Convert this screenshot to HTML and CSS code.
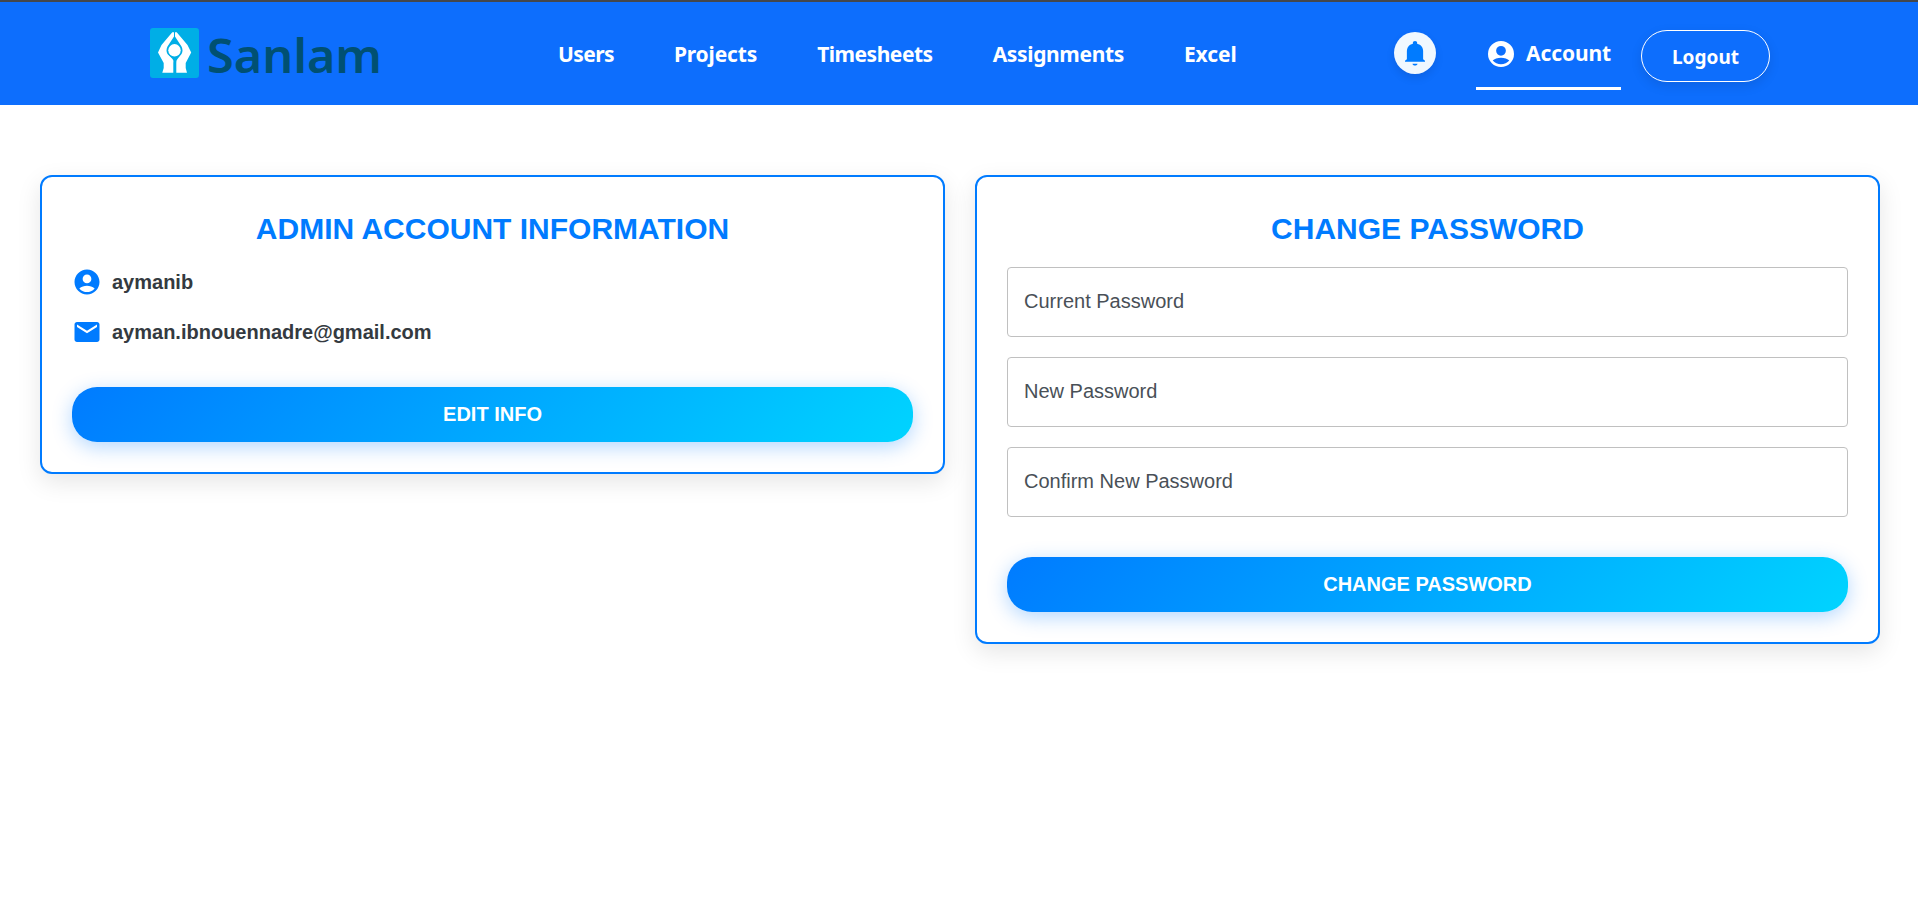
FILE: index.html
```html
<!DOCTYPE html>
<html lang="en">
<head>
<meta charset="utf-8">
<title>Account</title>
<link rel="stylesheet" href="styles.css">
</head>
<body>
<header class="navbar">
  <a class="brand">
    <svg class="brand-mark" width="49" height="50" viewBox="0 0 49 50">
      <rect width="49" height="50" rx="3" fill="#00aee6"/>
      <path fill="#fff" d="M22.300 4.300H24V8.500L17.500 18.500Q15.500 22.500 17.500 26L22.500 31Q24 32.500 23.300 35V44.700H12.300L13.700 40V35L8 24.500 11.500 17z"/>
      <path fill="#fff" d="M26.700 4.300H25V8.500L31.500 18.500Q33.500 22.500 31.500 26L27.500 31Q26 32.500 26.300 35V44.700H37L35.700 40V35L41.200 24.500 37.500 17z"/>
      <circle cx="24.500" cy="22.300" r="7.400" fill="#00aee6"/>
      <circle cx="24.500" cy="22.300" r="6.200" fill="#fff"/>
    </svg>
    <svg class="brand-name" width="176" height="62" viewBox="0 0 176 62">
      <text class="brand-text" x="-1" y="44.500" textLength="175" lengthAdjust="spacingAndGlyphs">Sanlam</text>
    </svg>
  </a>
  <nav class="menu">
    <a class="users">Users</a>
    <a class="projects">Projects</a>
    <a class="timesheets">Timesheets</a>
    <a class="assignments">Assignments</a>
    <a class="excel">Excel</a>
  </nav>
  <div class="actions">
    <button class="bell" aria-label="Notifications">
      <svg width="30" height="30" viewBox="0 0 24 24" fill="#007bff"><path d="M12 22c1.100 0 2-.6 2-1.500h-4c0 .9.9 1.500 2 1.500zM18.500 17V10.500c0-3-1.600-5.200-4.800-6V3.800c0-.9-.7-1.500-1.700-1.500s-1.700.6-1.700 1.500v.7c-3.200.8-4.800 3-4.800 6V17l-1.500 1.200v.8h16v-.8z"/></svg>
    </button>
    <a class="account">
      <svg width="26" height="26" viewBox="0 0 16 16" fill="#fff"><path fill-rule="evenodd" d="M8 0a8 8 0 1 1 0 16A8 8 0 0 1 8 0zM8 3a3 3 0 1 0 0 6 3 3 0 0 0 0-6zM8 14.300c2 0 3.900-.9 5.100-2.300C12.300 11 10 10.300 8 10.300S3.700 11 2.900 12c1.200 1.400 3.100 2.300 5.100 2.300z"/></svg>
      <span>Account</span>
    </a>
    <button class="logout">Logout</button>
  </div>
</header>
<main class="content">
  <section class="card">
    <h1 class="title">Admin Account Information</h1>
    <ul class="details">
      <li class="detail">
        <svg width="30" height="30" viewBox="0 0 24 24" fill="#007bff"><path d="M12 2C6.480 2 2 6.480 2 12s4.480 10 10 10 10-4.480 10-10S17.520 2 12 2zm0 4c1.930 0 3.500 1.570 3.500 3.500S13.930 13 12 13s-3.500-1.570-3.500-3.500S10.070 6 12 6zm0 14c-2.030 0-4.430-.82-6.140-2.880C7.550 15.800 9.680 15 12 15s4.450.8 6.140 2.120C16.430 19.180 14.030 20 12 20z"/></svg>
        <span class="name">aymanib</span>
      </li>
      <li class="detail">
        <svg width="30" height="30" viewBox="0 0 24 24" fill="#007bff"><path d="M20 4H4c-1.100 0-1.990.9-1.990 2L2 18c0 1.100.9 2 2 2h16c1.100 0 2-.9 2-2V6c0-1.100-.9-2-2-2zm0 4-8 5-8-5V6l8 5 8-5v2z"/></svg>
        <span class="email">ayman.ibnouennadre@gmail.com</span>
      </li>
    </ul>
    <button class="primary">Edit Info</button>
  </section>
  <section class="card">
    <h1 class="title">Change Password</h1>
    <form class="fields">
      <label class="field">Current Password</label>
      <label class="field">New Password</label>
      <label class="field">Confirm New Password</label>
    </form>
    <button class="primary">Change Password</button>
  </section>
</main>
</body>
</html>
```

FILE: styles.css
```css
* { box-sizing: border-box; }
body { margin: 0; min-height: 100vh; background: #fff; font-family: "Liberation Sans", Arial, sans-serif; }
button { border: 0; margin: 0; font: inherit; }
.navbar { height: 105px; border-top: 2px solid #44474c; background: #0d6efd; display: flex; padding-left: 150px; color: #fff; font-family: "Noto Sans", "Open Sans", sans-serif; font-weight: 700; }
.brand { display: flex; align-items: flex-start; gap: 9px; padding-top: 26px; width: 408px; flex: none; }
.brand-text { font: 600 46px "Noto Sans", sans-serif; fill: #005072; }
.menu { display: flex; gap: 60px; padding-top: 38px; font-size: 21px; line-height: 29px; width: 836px; flex: none; letter-spacing: -0.6px; }
.projects { letter-spacing: -0.15px; }
.timesheets { letter-spacing: -0.48px; }
.assignments { letter-spacing: -0.35px; }
.excel { letter-spacing: -0.1px; }
.actions { display: flex; align-items: flex-start; }
.bell { width: 42px; height: 42px; margin-top: 30px; padding: 6px; border-radius: 50%; background: #f0f8ff; box-shadow: 0 4px 8px rgba(0,0,0,.1); }
.bell svg { display: block; }
.account { display: flex; align-items: center; gap: 12px; width: 145px; height: 61px; margin: 27px 20px 0 40px; padding: 0 0 9px 12px; border-bottom: 3px solid #fff; font-size: 21px; line-height: 29px; letter-spacing: -0.1px; }
.logout { width: 129px; height: 52px; margin-top: 28px; padding: 1px 0 0; border: 1px solid #fff; border-radius: 26px; background: transparent; color: #fff; font-size: 19px; box-shadow: 0 4px 12px rgba(0,0,0,.1); letter-spacing: 0; }
.content { display: grid; grid-template-columns: 1fr 1fr; gap: 30px; align-items: start; padding: 70px 38px 60px 40px; }
.card { border: 2px solid #007bff; border-radius: 12px; padding: 30px; background: #fff; box-shadow: 0 8px 24px rgba(0,0,0,.1); }
.title { margin: 0; padding-top: 2px; height: 60px; color: #007bff; font-size: 30px; line-height: 40px; text-align: center; text-transform: uppercase; }
.details { list-style: none; margin: 0 0 40px; padding: 0; display: grid; gap: 20px; }
.detail { display: flex; align-items: center; gap: 10px; height: 30px; color: #343a40; font-size: 20px; font-weight: 700; }
.fields { display: grid; gap: 20px; margin: 0 0 40px; }
.field { height: 70px; padding: 0 16px; border: 1px solid #c0c0c0; border-radius: 4px; color: #495057; font-size: 20px; line-height: 67px; }
.primary { display: block; width: 100%; height: 55px; border-radius: 25px; background: linear-gradient(135deg, #007bff, #00d4ff); color: #fff; font-size: 20px; line-height: 22px; padding: 0 0 1px; font-weight: 700; text-transform: uppercase; box-shadow: 0 5px 20px rgba(0,123,255,.3); }
```
